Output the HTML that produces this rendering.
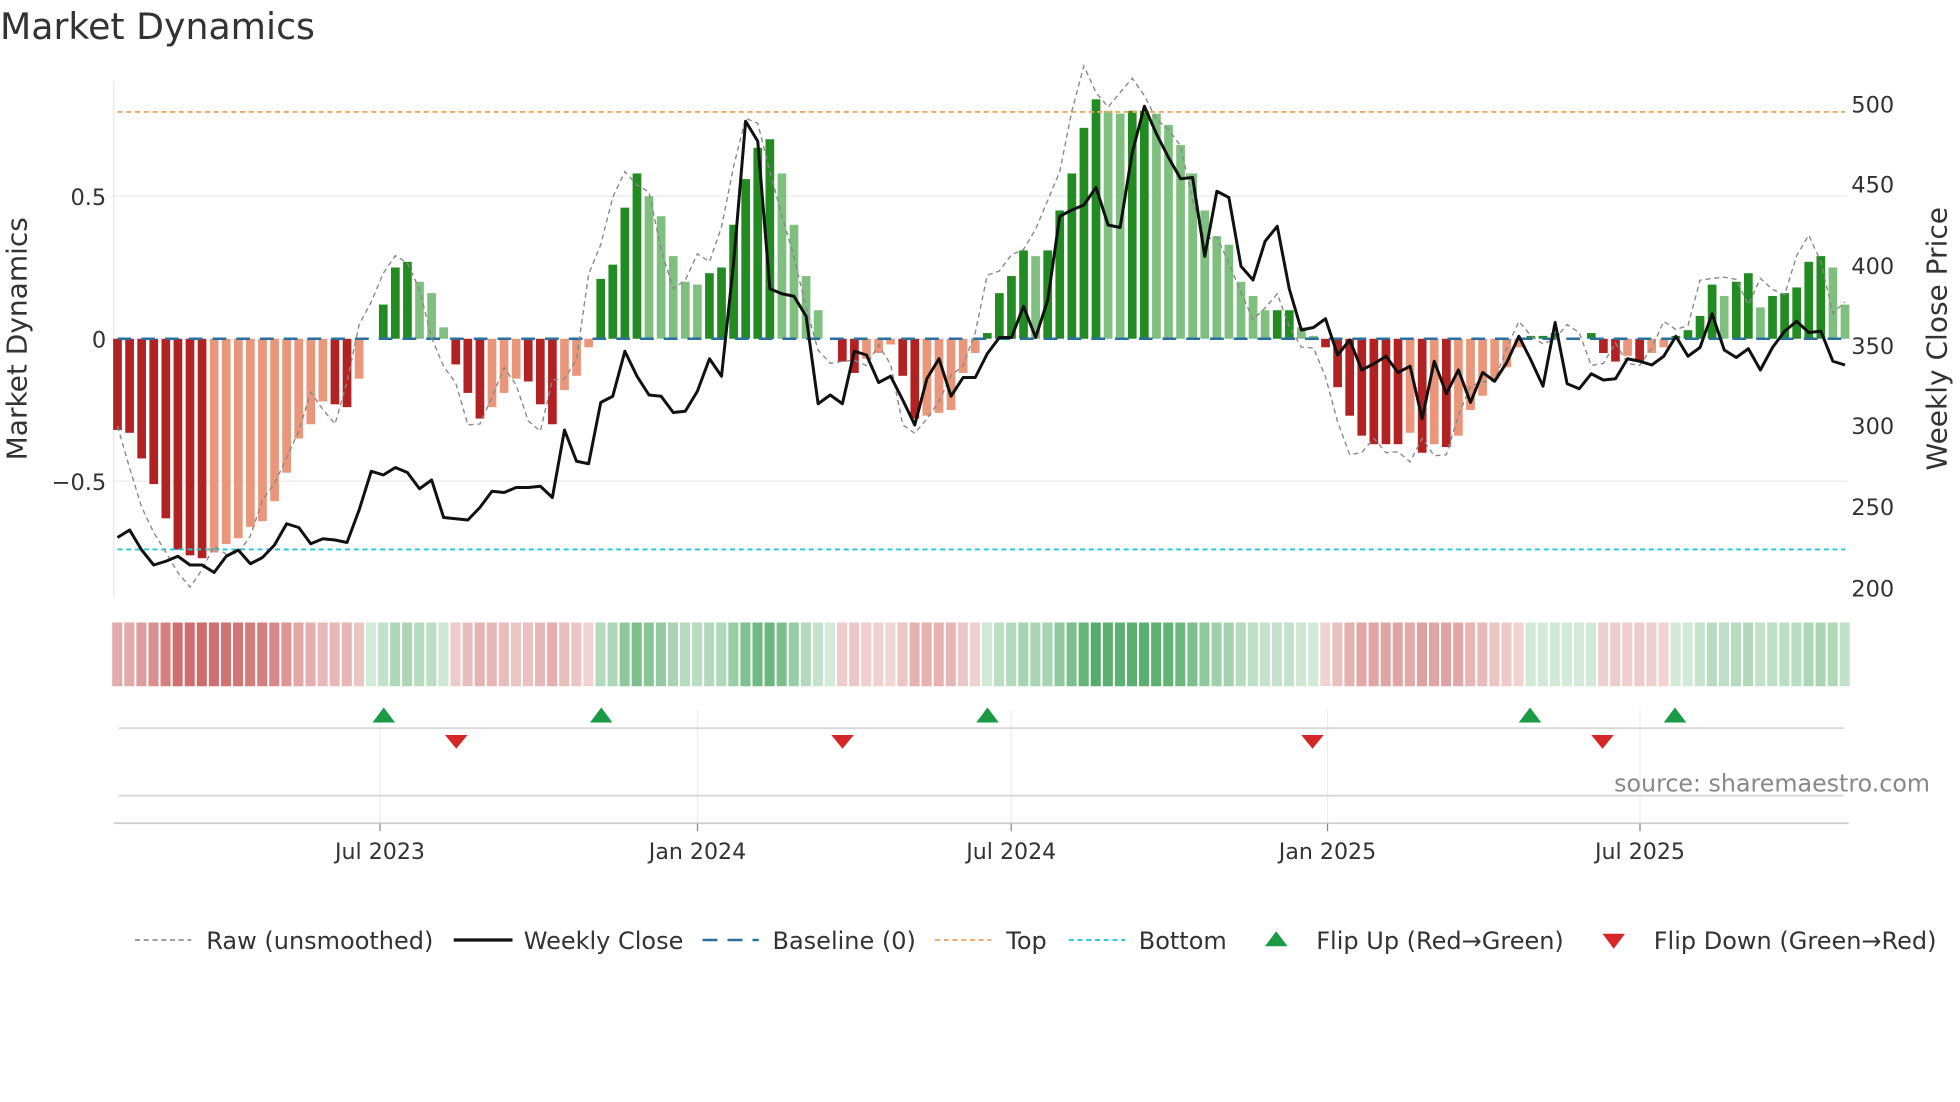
<!DOCTYPE html>
<html><head><meta charset="utf-8">
<style>
html,body{margin:0;padding:0;background:#fff;width:1960px;height:1102px;overflow:hidden}
svg{display:block;font-family:"DejaVu Sans","Liberation Sans",sans-serif}
</style></head>
<body>
<svg id="c" width="1960" height="1102" viewBox="0 0 1568 881.6" xmlns="http://www.w3.org/2000/svg">
<rect width="1568" height="882" fill="#fff"/>
<text x="0" y="31" font-size="29" fill="#333">Market Dynamics</text>
<g stroke="#eceef0" stroke-width="1.2">
<line x1="91" y1="157" x2="1478" y2="157"/>
<line x1="91" y1="385" x2="1478" y2="385"/>
</g>
<line x1="91" y1="65" x2="91" y2="478" stroke="#e6e6e6" stroke-width="1"/>
<g id="bars"></g>
<line x1="94" y1="271" x2="1476" y2="271" stroke="#2a6fa0" stroke-width="2" stroke-dasharray="11,8"/>
<line x1="94" y1="89.5" x2="1476" y2="89.5" stroke="#f0a860" stroke-width="1.5" stroke-dasharray="4,3"/>
<line x1="94" y1="439.5" x2="1476" y2="439.5" stroke="#22c8d8" stroke-width="1.5" stroke-dasharray="4,3"/>
<path id="raw" fill="none" stroke="#888" stroke-width="1.1" stroke-dasharray="4,3"/>
<path id="price" fill="none" stroke="#111" stroke-width="2.4" stroke-linejoin="round"/>
<g font-size="18" fill="#333" text-anchor="end">
<text x="85" y="164">0.5</text><text x="85" y="278">0</text><text x="85" y="392">−0.5</text>
</g>
<g font-size="18" fill="#333">
<text x="1481" y="90">500</text><text x="1481" y="154">450</text><text x="1481" y="219">400</text>
<text x="1481" y="283">350</text><text x="1481" y="347">300</text><text x="1481" y="412">250</text><text x="1481" y="477">200</text>
</g>
<text transform="translate(21,271) rotate(-90)" font-size="22.4" fill="#333" text-anchor="middle">Market Dynamics</text>
<text transform="translate(1557,271) rotate(-90)" font-size="22.4" fill="#333" text-anchor="middle">Weekly Close Price</text>
<g id="heat"></g>
<g stroke="#eceef0" stroke-width="1">
<line x1="304" y1="568" x2="304" y2="660"/><line x1="558" y1="568" x2="558" y2="660"/>
<line x1="809" y1="568" x2="809" y2="660"/><line x1="1062" y1="568" x2="1062" y2="660"/>
<line x1="1312" y1="568" x2="1312" y2="660"/>
</g>
<line x1="95" y1="582.5" x2="1475" y2="582.5" stroke="#d8d8d8" stroke-width="1.5"/>
<line x1="95" y1="636.5" x2="1475" y2="636.5" stroke="#d8d8d8" stroke-width="1.5"/>
<line x1="91" y1="658.5" x2="1479" y2="658.5" stroke="#d0d0d0" stroke-width="1.5"/>
<g stroke="#888" stroke-width="1">
<line x1="304" y1="659" x2="304" y2="665"/><line x1="558" y1="659" x2="558" y2="665"/>
<line x1="809" y1="659" x2="809" y2="665"/><line x1="1062" y1="659" x2="1062" y2="665"/>
<line x1="1312" y1="659" x2="1312" y2="665"/>
</g>
<g id="flips"></g>
<text x="1544" y="633" font-size="19" fill="#888" text-anchor="end">source: sharemaestro.com</text>
<g font-size="17.7" fill="#333" text-anchor="middle">
<text x="304" y="687">Jul 2023</text><text x="558" y="687">Jan 2024</text><text x="809" y="687">Jul 2024</text>
<text x="1062" y="687">Jan 2025</text><text x="1312" y="687">Jul 2025</text>
</g>
<g font-size="19.2" fill="#333">
<line x1="108" y1="752" x2="153" y2="752" stroke="#888" stroke-width="1.3" stroke-dasharray="4,3"/>
<text x="165" y="759">Raw (unsmoothed)</text>
<line x1="363" y1="752" x2="410" y2="752" stroke="#111" stroke-width="2.6"/>
<text x="419" y="759">Weekly Close</text>
<line x1="562" y1="752" x2="607" y2="752" stroke="#2a6fa0" stroke-width="2" stroke-dasharray="12,8"/>
<text x="618" y="759">Baseline (0)</text>
<line x1="748" y1="752" x2="793" y2="752" stroke="#f0a860" stroke-width="1.5" stroke-dasharray="4,3"/>
<text x="805" y="759">Top</text>
<line x1="855" y1="752" x2="900" y2="752" stroke="#22c8d8" stroke-width="1.5" stroke-dasharray="4,3"/>
<text x="911" y="759">Bottom</text>
<polygon points="1012,757 1030,757 1021,745" fill="#1a9a45"/>
<text x="1053" y="759">Flip Up (Red→Green)</text>
<polygon points="1282,747 1300,747 1291,759" fill="#d62728"/>
<text x="1323" y="759">Flip Down (Green→Red)</text>
</g>
</svg>
<script>
var v=[-0.32,-0.33,-0.42,-0.51,-0.63,-0.74,-0.76,-0.77,-0.75,-0.72,-0.70,-0.66,-0.64,-0.57,-0.47,-0.35,-0.30,-0.22,-0.23,-0.24,-0.14,
0.0,0.12,0.25,0.27,0.20,0.16,0.04,
-0.09,-0.19,-0.28,-0.24,-0.19,-0.14,-0.15,-0.23,-0.30,-0.18,-0.13,-0.03,
0.21,0.26,0.46,0.58,0.50,0.43,0.29,0.20,0.19,0.23,0.25,0.40,0.56,0.67,0.70,0.58,0.40,0.22,0.10,
0.0,-0.08,-0.12,-0.07,-0.05,-0.02,-0.13,-0.28,-0.27,-0.26,-0.25,-0.12,-0.05,
0.02,0.16,0.22,0.31,0.29,0.31,0.45,0.58,0.74,0.84,0.80,0.79,0.80,0.80,0.79,0.75,0.68,0.58,0.45,0.36,0.33,0.20,0.15,0.10,0.10,0.10,0.04,0.01,
-0.03,-0.17,-0.27,-0.34,-0.37,-0.37,-0.37,-0.33,-0.40,-0.37,-0.38,-0.34,-0.25,-0.20,-0.14,-0.10,-0.03,
0.01,0.01,0.02,0.0,0.0,0.02,
-0.05,-0.08,-0.06,-0.08,-0.05,-0.03,
0.01,0.03,0.08,0.19,0.15,0.20,0.23,0.11,0.15,0.16,0.18,0.27,0.29,0.25,0.12];
var py=[430,424,440,452,449,445,452,452,458,445,440,451,446,436,419,422,435,431,432,434,408,377,380,374,378,391,384,414,415,416,406,393,394,390,390,389,398,344,369,371,322,317,281,301,316,317,330,329,313,287,301,210,97,113,231,235,237,253,323,316,323,281,284,306,301,320,340,303,287,317,302,302,283,270,270,245,270,240,173,168,164,150,180,182,122,85,107,126,143,142,205,153,158,213,224,193,181,231,264,262,255,284,272,296,291,285,298,293,335,289,315,296,322,298,305,290,269,288,309,258,307,311,299,304,303,287,289,292,285,269,285,278,251,280,286,279,296,278,265,257,266,265,289,292];
var N=v.length,x0=94,x1=1476,dx=(x1-x0)/(N-1),bw=dx*0.72,Z=271,S=228;
var ns="http://www.w3.org/2000/svg",B=document.getElementById('bars'),H=document.getElementById('heat');
function el(t,a,p){var e=document.createElementNS(ns,t);for(var k in a)e.setAttribute(k,a[k]);p.appendChild(e);return e;}
var maxA=0.84;
for(var i=0;i<N;i++){
 var x=x0+i*dx,val=v[i],prev=i?v[i-1]:0,c;
 if(val>=0)c=(val>=prev)?'#228b22':'#7fbf7f';else c=(val<=prev)?'#b22222':'#e9967a';
 if(Math.abs(val)>0.004){var h=Math.abs(val)*S;el('rect',{x:x-bw/2,y:val>0?Z-h:Z,width:bw,height:h,fill:c},B);}
 var a=0.22+0.65*Math.min(1,Math.abs(val)/maxA);
 var hc=val>=0?'rgba(60,160,85,'+a+')':'rgba(195,75,75,'+a+')';
 el('rect',{x:x-dx/2+0.6,y:498,width:dx-1.6,height:51,fill:hc},H);
}
var d='',r='';
for(var i=0;i<N;i++){var x=x0+i*dx;d+=(i?'L':'M')+x.toFixed(1)+','+py[i];
 var j=Math.min(N-1,i+1),rv=v[j]*1.08+(i%4==0?0.05:(i%4==2?-0.04:0));r+=(i?'L':'M')+x.toFixed(1)+','+(Z-rv*S).toFixed(1);}
document.getElementById('price').setAttribute('d',d);
document.getElementById('raw').setAttribute('d',r);
var F=document.getElementById('flips');
[307,481,790,1224,1340].forEach(function(x){el('polygon',{points:(x-9)+',578 '+(x+9)+',578 '+x+',566',fill:'#1a9a45'},F);});
[365,674,1050,1282].forEach(function(x){el('polygon',{points:(x-9)+',588 '+(x+9)+',588 '+x+',599',fill:'#d62728'},F);});
</script>
</body></html>
